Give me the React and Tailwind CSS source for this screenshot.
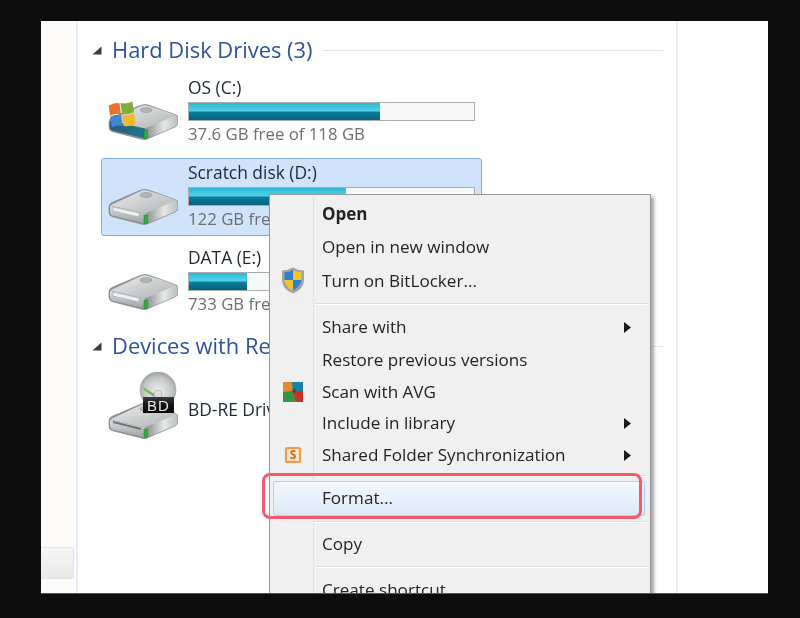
import React from "react";

const FONT = "font-['Open_Sans','Noto_Sans',sans-serif]";

const hardDisks = [
  { name: "OS (C:)", free: "37.6 GB free of 118 GB", used: 67, kind: "os" },
  { name: "Scratch disk (D:)", free: "122 GB free of 118 GB", used: 55, kind: "plain", selected: true },
  { name: "DATA (E:)", free: "733 GB free of 931 GB", used: 20.5, kind: "plain" },
];

function Collapse() {
  return (
    <svg width="10" height="9" viewBox="0 0 10 9" className="shrink-0">
      <path d="M9.5 0.5V8.5H0.5Z" fill="#3a3a3a" />
    </svg>
  );
}

function DriveBody({ front = "url(#frontFace)" }) {
  return (
    <>
      <path
        d="M1 18Q1 15 4 13.5L32 1.5Q37 -0.5 42 1.5L67 10.5Q70 11.5 70 14V19Q70 21.5 67 23L39 35Q37 36 34 35.2L4 27.5Q1 26.5 1 23Z"
        fill="url(#sideFace)"
        stroke="#7f8385"
        strokeWidth="0.7"
      />
      <path d="M2 16.5 33 2Q37 0.5 41 2L68 11.5 37 24.5Z" fill="url(#topFace)" />
      <path d="M2 17 37 24.5V34.5L4 26.5Q2 26 2 23Z" fill={front} />
      <ellipse cx="38" cy="6" rx="6" ry="2.6" fill="#b0b4b4" stroke="#8b8f8f" strokeWidth="0.5" />
      <rect x="36" y="26.5" width="3.2" height="8" fill="#2fae3c" stroke="#1c5f28" strokeWidth="0.4" />
    </>
  );
}

function DriveDefs() {
  return (
    <defs>
      <linearGradient id="topFace" x1="0" y1="0" x2="1" y2="1">
        <stop offset="0" stopColor="#eeefef" />
        <stop offset="1" stopColor="#aeb2b2" />
      </linearGradient>
      <linearGradient id="frontFace" x1="0" y1="0" x2="0" y2="1">
        <stop offset="0" stopColor="#dcdfe0" />
        <stop offset="1" stopColor="#9da1a3" />
      </linearGradient>
      <linearGradient id="sideFace" x1="0" y1="0" x2="1" y2="0">
        <stop offset="0" stopColor="#8d9192" />
        <stop offset="0.55" stopColor="#8f9394" />
        <stop offset="0.8" stopColor="#e6e7e7" />
        <stop offset="1" stopColor="#bcbfbf" />
      </linearGradient>
      <radialGradient id="disc" cx="0.5" cy="0.55" r="0.6">
        <stop offset="0" stopColor="#f2f2f2" />
        <stop offset="0.7" stopColor="#bfc2c3" />
        <stop offset="1" stopColor="#8d9091" />
      </radialGradient>
      <linearGradient id="osFront" x1="0" y1="0" x2="1" y2="0">
        <stop offset="0" stopColor="#2c5a7c" />
        <stop offset="1" stopColor="#1d7a8c" />
      </linearGradient>
      <linearGradient id="bdLabel" x1="0" y1="0" x2="0" y2="1">
        <stop offset="0" stopColor="#3a3a3a" />
        <stop offset="0.5" stopColor="#141414" />
        <stop offset="1" stopColor="#050505" />
      </linearGradient>
    </defs>
  );
}

function DriveIcon({ kind }) {
  if (kind === "os") {
    return (
      <svg width="70" height="39" viewBox="0 -3 70 39" className="shrink-0">
        <DriveDefs />
        <DriveBody front="url(#osFront)" />
        <g transform="rotate(-8 14 10)">
          <path d="M2 0Q8 -3 13 -1V10Q8 8 2 10Z" fill="#e8702c" />
          <path d="M14 -1Q20 1 26 -1V10Q20 12 14 10Z" fill="#7fae3a" />
          <path d="M2 11Q8 9 13 11V22Q8 20 2 22Z" fill="#3f86d0" />
          <path d="M14 11Q20 13 26 11V22Q20 24 14 22Z" fill="#f0b92c" />
        </g>
      </svg>
    );
  }
  if (kind === "bd") {
    return (
      <svg width="70" height="67" viewBox="0 -31 70 67" className="shrink-0">
        <DriveDefs />
        <DriveBody />
        <path d="M5 18 33 25V27L5 20Z" fill="#6f7374" />
        <circle cx="50" cy="-13" r="18" fill="url(#disc)" stroke="#9b9e9f" strokeWidth="0.5" />
        <path d="M35 -16 45 -10 43 -8 36 -13Z" fill="#6fbf4a" />
        <path d="M45 -10 49 -7 47 -6 43 -8Z" fill="#5a9bd8" />
        <circle cx="50" cy="-9" r="4" fill="#dcdcdc" stroke="#a5a5a5" strokeWidth="0.6" />
        <rect x="35" y="-6" width="31" height="16" fill="url(#bdLabel)" />
        <text x="50.5" y="7.5" textAnchor="middle" fontFamily="'Liberation Sans', sans-serif" fontSize="15" letterSpacing="1" fill="#e8e8e8">BD</text>
      </svg>
    );
  }
  return (
    <svg width="70" height="36" viewBox="0 0 70 36" className="shrink-0">
      <DriveDefs />
      <DriveBody />
      <path d="M5 18 31 24V28L5 22Z" fill="#eef1f4" stroke="#9a9ea0" strokeWidth="0.5" />
    </svg>
  );
}

function SectionHeader({ title }) {
  return (
    <div className="flex h-[24px] items-center pl-[14px]">
      <Collapse />
      <span className="ml-[10px] whitespace-nowrap text-[21.9px] leading-[24px] text-[#2d529c]">{title}</span>
      <div className="ml-[10px] mr-[13px] h-px flex-1 bg-[#dfe5ec]" />
    </div>
  );
}

function DriveTile({ drive }) {
  return (
    <div
      className={
        "ml-[23px] flex h-[78px] w-[381px] items-end rounded-[3px] border pl-[6px] " +
        (drive.selected ? "border-[#84acdd] bg-[#cfe4fa]" : "border-transparent")
      }
    >
      <div className="mb-[10px] w-[70px] shrink-0">
        <DriveIcon kind={drive.kind} />
      </div>
      <div className="ml-[10px] flex h-full w-[287px] flex-col pt-[2px]">
        <div className="h-[23px] text-[17.4px] leading-[23px] text-[#1d2735]">{drive.name}</div>
        <div className="mt-[3px] h-[19px] border border-[#a9acae] bg-[#f7f8f8]">
          <div
            className="h-full bg-[linear-gradient(to_bottom,#2bb7d3_0%,#56d3e8_48%,#0a7f9c_52%,#06627d_100%)]"
            style={{ width: `${drive.used}%` }}
          />
        </div>
        <div className="mt-[1px] whitespace-nowrap text-[16.8px] leading-[24px] text-[#6e6e6e]">{drive.free}</div>
      </div>
    </div>
  );
}

function Arrow() {
  return (
    <svg width="7" height="11" viewBox="0 0 7 11" className="absolute right-[14px]">
      <path d="M0 0 7 5.5 0 11Z" fill="#1a1a1a" />
    </svg>
  );
}

function ShieldIcon() {
  return (
    <svg width="24" height="27" viewBox="0 0 24 27">
      <path d="M12 0.5Q17 3.5 23 3.5V13Q23 22 12 26.5Q1 22 1 13V3.5Q7 3.5 12 0.5Z" fill="#a2a4a6" />
      <path d="M12 3Q16 5 20.5 5.5V13H12Z" fill="#f5c52f" />
      <path d="M12 3Q8 5 3.5 5.5V13H12Z" fill="#2f7fd0" />
      <path d="M3.5 13H12V23.5Q4.5 20 3.5 13Z" fill="#f5c52f" />
      <path d="M20.5 13H12V23.5Q19.5 20 20.5 13Z" fill="#2f7fd0" />
    </svg>
  );
}

function AvgIcon() {
  return (
    <svg width="20" height="20" viewBox="0 0 20 20">
      <rect width="20" height="20" fill="#3c9148" />
      <path d="M0 0H9L10 9 0 10Z" fill="#e2892d" />
      <path d="M9 0H20V9L10 9Z" fill="#1c7fa8" />
      <path d="M10 9 20 9V20H13Z" fill="#c8321f" />
      <path d="M9 8 12 6 13 10 10 11Z" fill="#2a2a2a" opacity="0.5" />
    </svg>
  );
}

function SyncIcon() {
  return (
    <div className="flex h-[16px] w-[16px] items-center justify-center rounded-[2px] border-2 border-[#ef9a4d] bg-[#fbe3c8] text-[12px] font-bold leading-none text-[#d9691a]">
      S
    </div>
  );
}

const menuItems = [
  { label: "Open", h: 33, bold: true },
  { label: "Open in new window", h: 34 },
  { label: "Turn on BitLocker...", h: 33, icon: <ShieldIcon /> },
  { sep: true, h: 13 },
  { label: "Share with", h: 34, sub: true },
  { label: "Restore previous versions", h: 32 },
  { label: "Scan with AVG", h: 31, icon: <AvgIcon /> },
  { label: "Include in library", h: 32, sub: true },
  { label: "Shared Folder Synchronization", h: 32, sub: true, icon: <SyncIcon /> },
  { sep: true, h: 10 },
  { label: "Format...", h: 35, hot: true },
  { sep: true, h: 12 },
  { label: "Copy", h: 32 },
  { sep: true, h: 14 },
  { label: "Create shortcut", h: 32 },
];

function ContextMenu() {
  return (
    <div className="absolute left-[228px] top-[173px] w-[382px] border border-[#979a9c] bg-[#f0f0f0] pt-[2px] shadow-[3px_3px_3px_rgba(0,0,0,0.35)]">
      <div className="absolute bottom-0 left-[43px] top-0 w-[2px] border-l border-[#e2e3e3] border-r-white" />
      {menuItems.map((item, i) => {
        if (item.sep) {
          return (
            <div key={i} className="flex items-center pl-[45px] pr-[3px]" style={{ height: item.h }}>
              <div className="h-[2px] w-full border-b border-white bg-[#dcdddd]" />
            </div>
          );
        }
        return (
          <div
            key={i}
            className={
              "relative ml-[3px] mr-[5px] flex items-center " +
              (item.hot
                ? "rounded-[3px] border border-[#aecff7] bg-[linear-gradient(to_bottom,#f3f8fd,#dde9f8)]"
                : "")
            }
            style={{ height: item.h }}
          >
            <div className="flex w-[40px] shrink-0 items-center justify-center">{item.icon}</div>
            <span
              className={
                "whitespace-nowrap leading-none text-[#242424] " +
                (item.bold ? "ml-[9px] text-[17px] font-bold" : "ml-[9px] text-[17.1px]") +
                (item.hot ? " -translate-x-px -translate-y-px" : "")
              }
            >
              {item.label}
            </span>
            {item.sub && <Arrow />}
          </div>
        );
      })}
    </div>
  );
}

export default function App() {
  return (
    <div className={"h-[618px] w-[800px] overflow-hidden bg-[#0d0d0d] pb-[24px] pl-[41px] pr-[32px] pt-[21px] " + FONT}>
      <div className="relative flex h-full overflow-hidden border-b border-[#555] bg-white blur-[0.5px]">
        {/* nav pane */}
        <div className="flex w-[37px] shrink-0 flex-col justify-end border-r-2 border-[#e3ebf9] bg-[#fdfcfa] pb-[14px] pr-[2px]">
          <div className="h-[32px] w-full rounded-r-[3px] border border-l-0 border-[#e2e2e2] bg-[linear-gradient(to_bottom,#f6f6f6,#e9e9e9)]" />
        </div>

        {/* drive list */}
        <div className="w-[600px] shrink-0 border-r-2 border-[#e3ebf9] pt-[17px]">
          <SectionHeader title="Hard Disk Drives (3)" />
          <div className="mt-[11px] flex flex-col gap-[7px]">
            {hardDisks.map((d) => (
              <DriveTile key={d.name} drive={d} />
            ))}
          </div>
          <div className="mt-[13px]">
            <SectionHeader title="Devices with Removable Storage (1)" />
          </div>
          <div className="ml-[23px] mt-[12px] flex h-[78px] w-[381px] items-end pl-[7px]">
            <div className="mb-[9px] w-[70px] shrink-0">
              <DriveIcon kind="bd" />
            </div>
            <div className="ml-[10px] self-center whitespace-nowrap text-[17.4px] text-[#1d2735]">BD-RE Drive (F:)</div>
          </div>
        </div>

        <ContextMenu />

        {/* red highlight around Format */}
        <div className="absolute left-[221px] top-[452px] h-[46px] w-[380px] rounded-[8px] border-[3px] border-[#f8596b]" />
      </div>
    </div>
  );
}
